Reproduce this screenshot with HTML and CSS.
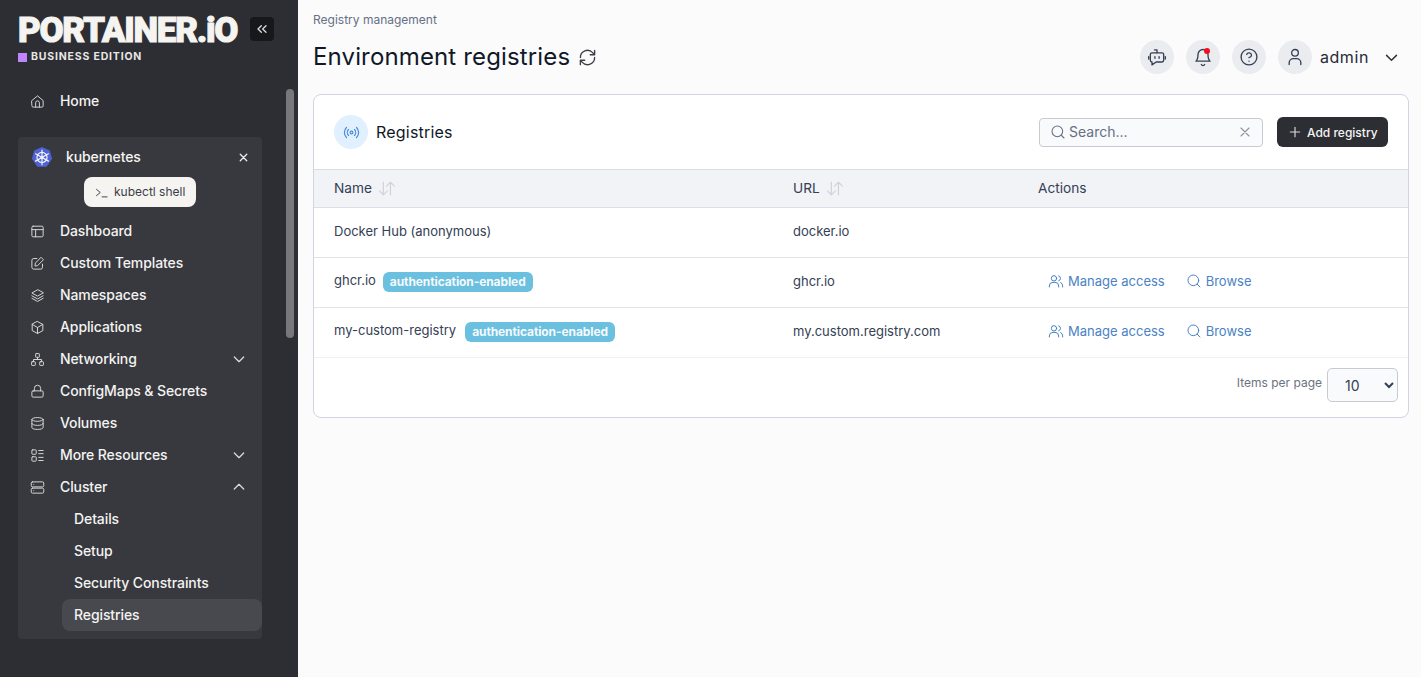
FILE: index.html
```html
<!DOCTYPE html>
<html lang="en">
<head>
<meta charset="utf-8">
<title>Environment registries</title>
<link rel="stylesheet" href="styles.css">
</head>
<body>
<div class="app">
  <aside class="sidebar">
    <div class="brand">
      <div class="brand-text">
        <div class="logo">PORTAINER.iO</div>
        <div class="edition"><span class="edition-mark"></span>BUSINESS EDITION</div>
      </div>
      <button class="collapse">
        <svg class="ic12" viewBox="0 0 24 24"><path d="M11 17l-5-5 5-5M18 17l-5-5 5-5"/></svg>
      </button>
    </div>
    <div class="side-scroll">
      <span class="thumb"></span>
      <a class="item home">
        <svg class="ic" viewBox="0 0 24 24"><path d="M3 10.500 12 3l9 7.500V19a2 2 0 0 1-2 2H5a2 2 0 0 1-2-2z"/><path d="M9 21v-7a3 3 0 0 1 6 0v7"/></svg>
        <span>Home</span>
      </a>
      <div class="env">
        <div class="env-head">
          <svg class="k8s" viewBox="0 0 24 24"><polygon class="k8s-bg" points="12,1 20.500,5 23,14 17,22.500 7,22.500 1,14 3.500,5"/><circle class="k8s-line" cx="12" cy="12.500" r="5.500"/><circle class="k8s-dot" cx="12" cy="12.500" r="1.400"/><path class="k8s-line" d="M12 4.500v16M5 8.500l14 8M19 8.500l-14 8"/></svg>
          <span class="env-name">kubernetes</span>
          <svg class="ic-x" viewBox="0 0 24 24"><path d="M6 6l12 12M18 6 6 18"/></svg>
        </div>
        <div class="shell-row">
          <button class="shell">
            <svg class="ic-term" viewBox="0 0 24 24"><path d="M4 17l6-5-6-5M13 19h8"/></svg>
            kubectl shell
          </button>
        </div>
        <a class="item">
          <svg class="ic" viewBox="0 0 24 24"><rect x="3" y="3.500" width="18" height="17" rx="2"/><path d="M3 9h18M9 9v11.500"/></svg>
          <span>Dashboard</span>
        </a>
        <a class="item">
          <svg class="ic" viewBox="0 0 24 24"><path d="M11 4H6a3 3 0 0 0-3 3v11a3 3 0 0 0 3 3h11a3 3 0 0 0 3-3v-5"/><path d="M18 2.500 21.500 6 12 15.500l-4 .5.500-4z"/></svg>
          <span>Custom Templates</span>
        </a>
        <a class="item">
          <svg class="ic" viewBox="0 0 24 24"><path d="M12 3 3 8l9 5 9-5z"/><path d="M3 12.500l9 5 9-5M3 16.500l9 5 9-5"/></svg>
          <span>Namespaces</span>
        </a>
        <a class="item">
          <svg class="ic" viewBox="0 0 24 24"><path d="M12 2.500 20.500 7v10L12 21.500 3.500 17V7z"/><path d="M3.500 7 12 12l8.500-5M12 12v9.500"/></svg>
          <span>Applications</span>
        </a>
        <a class="item">
          <svg class="ic" viewBox="0 0 24 24"><rect x="9" y="2.500" width="6" height="6" rx="1"/><rect x="2.500" y="15.500" width="6" height="6" rx="1"/><rect x="15.500" y="15.500" width="6" height="6" rx="1"/><path d="M12 8.500V12M5.500 15.500V12h13v3.500"/></svg>
          <span>Networking</span>
          <svg class="chev" viewBox="0 0 24 24"><path d="M5 9l7 7 7-7"/></svg>
        </a>
        <a class="item">
          <svg class="ic" viewBox="0 0 24 24"><rect x="3" y="11" width="18" height="10" rx="2"/><path d="M7 11V7a5 5 0 0 1 10 0v4"/></svg>
          <span>ConfigMaps &amp; Secrets</span>
        </a>
        <a class="item">
          <svg class="ic" viewBox="0 0 24 24"><ellipse cx="12" cy="5.500" rx="9" ry="3"/><path d="M3 5.500v13c0 1.700 4 3 9 3s9-1.300 9-3v-13M3 12c0 1.700 4 3 9 3s9-1.300 9-3"/></svg>
          <span>Volumes</span>
        </a>
        <a class="item">
          <svg class="ic" viewBox="0 0 24 24"><rect x="3" y="3" width="7" height="7" rx="1"/><rect x="3" y="14" width="7" height="7" rx="1"/><path d="M14 4h7M14 9h7M14 15h7M14 20h7"/></svg>
          <span>More Resources</span>
          <svg class="chev" viewBox="0 0 24 24"><path d="M5 9l7 7 7-7"/></svg>
        </a>
        <a class="item">
          <svg class="ic" viewBox="0 0 24 24"><rect x="2" y="3" width="20" height="8" rx="2"/><rect x="2" y="13" width="20" height="8" rx="2"/><path d="M6 7h.01M6 17h.01"/></svg>
          <span>Cluster</span>
          <svg class="chev" viewBox="0 0 24 24"><path d="M5 15l7-7 7 7"/></svg>
        </a>
        <a class="item sub">Details</a>
        <a class="item sub">Setup</a>
        <a class="item sub">Security Constraints</a>
        <a class="item sub active">Registries</a>
      </div>
    </div>
  </aside>

  <main class="main">
    <div class="crumb">Registry management</div>
    <header class="topbar">
      <h1 class="title">Environment registries</h1>
      <svg class="refresh" viewBox="0 0 24 24"><path d="M3 12a9 9 0 0 1 15.500-6.200L21 8.500M21 3v5.500h-5.500"/><path d="M21 12a9 9 0 0 1-15.500 6.200L3 15.500M3 21v-5.500h5.500"/></svg>
      <div class="top-actions">
        <span class="round">
          <svg class="ic-top" viewBox="0 0 24 24"><path d="M12 7V3.500H9"/><path d="M6 7h12a2 2 0 0 1 2 2v7a2 2 0 0 1-2 2h-7l-5 3.500V18a2 2 0 0 1-2-2V9a2 2 0 0 1 2-2z"/><path d="M2 11.500v3M22 11.500v3M9.500 11.500v2M14.500 11.500v2"/></svg>
        </span>
        <span class="round bell">
          <svg class="ic-top" viewBox="0 0 24 24"><path d="M18 9a6 6 0 0 0-12 0c0 6-2.500 8-2.500 8h17S18 15 18 9"/><path d="M10 21a2.200 2.200 0 0 0 4 0"/></svg>
          <span class="dot"></span>
        </span>
        <span class="round">
          <svg class="ic-top" viewBox="0 0 24 24"><circle cx="12" cy="12" r="9.500"/><path d="M9.200 9a3 3 0 0 1 5.800 1c0 2-3 2.800-3 2.800M12 17h.01"/></svg>
        </span>
        <span class="round">
          <svg class="ic-top" viewBox="0 0 24 24"><circle cx="12" cy="7" r="4"/><path d="M5 21v-2a5 5 0 0 1 5-5h4a5 5 0 0 1 5 5v2"/></svg>
        </span>
        <span class="user">admin</span>
        <svg class="user-chev" viewBox="0 0 24 24"><path d="M5 9l7 7 7-7"/></svg>
      </div>
    </header>

    <section class="card">
      <div class="card-head">
        <span class="card-icon">
          <svg viewBox="0 0 24 24"><circle cx="12" cy="12" r="2"/><path d="M16.200 7.800a6 6 0 0 1 0 8.400M7.800 16.200a6 6 0 0 1 0-8.400M19.100 4.900a10 10 0 0 1 0 14.200M4.900 19.100a10 10 0 0 1 0-14.200"/></svg>
        </span>
        <h2 class="card-title">Registries</h2>
        <div class="search">
          <svg class="search-ic" viewBox="0 0 24 24"><circle cx="11" cy="11" r="8"/><path d="M21 21l-4.300-4.300"/></svg>
          <span class="search-text">Search...</span>
          <svg class="search-x" viewBox="0 0 24 24"><path d="M6 6l12 12M18 6 6 18"/></svg>
        </div>
        <button class="add">
          <svg class="add-ic" viewBox="0 0 24 24"><path d="M12 4v16M4 12h16"/></svg>
          Add registry
        </button>
      </div>
      <table class="table">
        <colgroup><col class="c1"><col class="c2"><col></colgroup>
        <thead>
          <tr>
            <th>Name <svg class="sort" viewBox="0 0 24 24"><path d="M8 4v16M3 15l5 5 5-5M17 20V4M12 9l5-5 5 5"/></svg></th>
            <th>URL <svg class="sort" viewBox="0 0 24 24"><path d="M8 4v16M3 15l5 5 5-5M17 20V4M12 9l5-5 5 5"/></svg></th>
            <th>Actions</th>
          </tr>
        </thead>
        <tbody>
          <tr>
            <td>Docker Hub (anonymous)</td>
            <td>docker.io</td>
            <td></td>
          </tr>
          <tr>
            <td class="named">ghcr.io<span class="badge">authentication-enabled</span></td>
            <td>ghcr.io</td>
            <td class="acts">
              <a class="link"><svg class="ic-link" viewBox="0 0 24 24"><circle cx="9" cy="8" r="4"/><path d="M2 21v-1.500A5.500 5.500 0 0 1 7.500 14h3a5.500 5.500 0 0 1 5.500 5.500V21M16 4.200a4 4 0 0 1 0 7.600M19 14.300a5.500 5.500 0 0 1 3 5V21"/></svg>Manage access</a><a class="link"><svg class="ic-link" viewBox="0 0 24 24"><circle cx="11" cy="11" r="8"/><path d="M21 21l-4.300-4.300"/></svg>Browse</a>
            </td>
          </tr>
          <tr>
            <td class="named">my-custom-registry<span class="badge wide">authentication-enabled</span></td>
            <td>my.custom.registry.com</td>
            <td class="acts">
              <a class="link"><svg class="ic-link" viewBox="0 0 24 24"><circle cx="9" cy="8" r="4"/><path d="M2 21v-1.500A5.500 5.500 0 0 1 7.500 14h3a5.500 5.500 0 0 1 5.500 5.500V21M16 4.200a4 4 0 0 1 0 7.600M19 14.300a5.500 5.500 0 0 1 3 5V21"/></svg>Manage access</a><a class="link"><svg class="ic-link" viewBox="0 0 24 24"><circle cx="11" cy="11" r="8"/><path d="M21 21l-4.300-4.300"/></svg>Browse</a>
            </td>
          </tr>
        </tbody>
      </table>
      <div class="card-foot">
        <label class="per-label" for="per">Items per page</label>
        <select class="per" id="per"><option>10</option></select>
      </div>
    </section>
  </main>
</div>
</body>
</html>
```

FILE: styles.css
```css
* { box-sizing: border-box; }
html, body { margin: 0; height: 100%; overflow: hidden; }
body { font-family: Inter, "Liberation Sans", sans-serif; font-size: 14px; color: #1f2430; background: #fbfbfc; }
svg { fill: none; stroke: currentColor; stroke-width: 2; stroke-linecap: round; stroke-linejoin: round; flex: none; display: block; }
h1, h2 { margin: 0; font-weight: 400; }
button { font-family: inherit; border: 0; }

.app { display: flex; height: 677px; }

.sidebar { width: 298px; flex: none; background: #2d2e33; color: #f5f4f1; display: flex; flex-direction: column; }
.brand { display: flex; align-items: flex-start; padding: 17px 24px 0 18px; height: 85px; justify-content: space-between; }
.logo { font-family: Roboto, Inter, sans-serif; font-weight: 900; font-size: 35px; line-height: 27px; letter-spacing: -1.3px; color: #f5f4f0; white-space: nowrap; -webkit-text-stroke: 1px #f5f4f0; }
.edition { display: flex; align-items: center; margin-top: 6px; font-size: 10.500px; font-weight: 700; letter-spacing: .82px; line-height: 14px; color: #e8e7e4; white-space: nowrap; }
.edition-mark { width: 9px; height: 9px; background: #c084fc; margin-right: 4px; }
.collapse { width: 24px; height: 24px; border-radius: 4px; background: #17181b; color: #d8d8d8; padding: 0; display: flex; align-items: center; justify-content: center; }
.ic12 { width: 16px; height: 16px; }

.side-scroll { position: relative; padding: 0 36px 0 18px; }
.thumb { position: absolute; left: 286px; top: 4px; width: 8px; height: 249px; border-radius: 4px; background: #77777c; }
.item { display: flex; align-items: center; height: 32px; font-size: 14px; font-weight: 500; letter-spacing: -.1px; color: #f3f3f2; padding: 0 15px 2px 12px; border-radius: 8px; }
.item span { margin-left: 15px; }
.ic { width: 15px; height: 15px; margin-top: 2px; stroke-width: 1.600; color: #d4d4d6; }
.chev { width: 16px; height: 16px; margin-left: auto; margin-top: 2px; color: #d8d8da; }
.home { margin-bottom: 20px; }

.env { background: #38393e; border-radius: 4px; height: 502px; }
.env-head { display: flex; align-items: center; height: 40px; padding: 0 12px 0 13px; }
.k8s { width: 22px; height: 22px; stroke: none; }
.k8s-bg { fill: #4f62d3; }
.k8s-line { stroke: #f2f3fb; stroke-width: 1.300; fill: none; }
.k8s-dot { fill: #f2f3fb; }
.env-name { margin: 0 0 2px 13px; font-size: 14px; font-weight: 500; letter-spacing: -.1px; color: #f5f5f4; }
.ic-x { width: 13px; height: 13px; margin-left: auto; color: #f0f0f0; stroke-width: 2.400; }
.shell-row { display: flex; justify-content: center; height: 38px; }
.shell { display: flex; align-items: center; height: 30px; width: 112px; border-radius: 8px; background: #f5f4f0; color: #3a3d47; font-size: 12px; padding: 0 0 2px 10px; }
.ic-term { width: 15px; height: 15px; margin: 2px 5px 0 0; stroke-width: 1.500; color: #3a3d47; }
.sub { padding-left: 12px; margin-left: 44px; }
.active { background: #48494e; }

.main { flex: 1; padding: 13px 12px 0 15px; min-width: 0; }
.crumb { font-size: 12px; line-height: 14px; color: #667085; }
.topbar { display: flex; align-items: center; height: 40px; margin-top: 10px; margin-bottom: 17px; }
.title { font-size: 24px; line-height: 30px; color: #101828; letter-spacing: .14px; }
.refresh { width: 19px; height: 19px; margin-left: 8px; color: #3c3f46; stroke-width: 1.700; }
.top-actions { margin-left: auto; display: flex; align-items: center; gap: 12px; padding-right: 9px; color: #344054; }
.round { position: relative; width: 34px; height: 34px; border-radius: 50%; background: #eaecf0; display: flex; align-items: center; justify-content: center; }
.ic-top { width: 20px; height: 20px; stroke-width: 1.600; }
.dot { position: absolute; width: 6px; height: 6px; border-radius: 50%; background: #f30f1f; top: 8px; left: 18px; }
.user { font-size: 16px; margin-left: -4px; color: #252a35; letter-spacing: .6px; }
.user-chev { width: 17px; height: 17px; margin-left: 2px; color: #2f3137; }

.card { background: #fff; border: 1px solid #d0d5e2; border-radius: 8px; height: 324px; overflow: hidden; }
.card-head { display: flex; align-items: center; height: 74px; padding: 0 20px; }
.card-icon { width: 34px; height: 34px; border-radius: 50%; background: #e0f0fe; color: #4a8bd6; display: flex; align-items: center; justify-content: center; }
.card-icon svg { width: 17px; height: 17px; stroke-width: 1.700; }
.card-title { font-size: 16px; margin-left: 8px; color: #101828; letter-spacing: .2px; }
.search { margin-left: auto; display: flex; align-items: center; width: 224px; height: 29px; border: 1px solid #c7cad1; border-radius: 4px; background: #f9fafb; padding: 0 9px 0 10px; color: #667085; }
.search-ic { width: 16px; height: 16px; stroke-width: 1.600; }
.search-text { margin: 0 0 2px 3px; font-size: 14px; color: #667085; }
.search-x { width: 16px; height: 16px; margin-left: auto; color: #8e939c; stroke-width: 1.700; }
.add { margin-left: 14px; display: flex; align-items: center; height: 30px; width: 111px; background: #2d2e33; color: #f5f5f4; border-radius: 6px; font-size: 12px; font-weight: 500; padding: 0 0 0 11px; }
.add-ic { width: 14px; height: 14px; margin-right: 5px; color: #d8d8d8; stroke-width: 2; }

.table { width: 100%; border-collapse: collapse; table-layout: fixed; font-size: 13px; color: #344054; }
.c1 { width: 459px; }
.c2 { width: 245px; }
.table th { height: 38px; background: #f2f3f7; border-top: 1px solid #dcdee6; border-bottom: 1px solid #dcdee6; text-align: left; font-weight: 400; font-size: 13.700px; line-height: 20px; padding: 0 0 1px 20px; color: #344054; }
.sort { display: inline-block; width: 19px; height: 19px; vertical-align: -5px; margin-left: 1px; color: #d0d3da; stroke-width: 1.600; }
.table td { height: 50px; padding: 0 0 4px 20px; border-bottom: 1px solid #e2e3e6; }
.table tr:last-child td { border-bottom-color: #f0f1f2; }
.table td.acts { white-space: nowrap; padding-bottom: 0; }
.table td.named { padding-bottom: 1px; }
.badge { display: inline-block; margin-left: 7px; padding: 0 7px; height: 20px; line-height: 19px; border-radius: 6px; background: #6bbfdf; color: #f4fafd; font-size: 12px; font-weight: 700; letter-spacing: -.1px; vertical-align: -1px; }
.badge.wide { margin-left: 9px; }
.link { display: inline-flex; align-items: center; color: #4a82c4; margin-left: 10px; margin-right: 11px; }
.link + .link { margin-left: 10px; }
.ic-link { width: 16px; height: 16px; margin-right: 4px; stroke-width: 1.500; }

.card-foot { display: flex; align-items: center; justify-content: flex-end; padding: 10px 10px 0 0; }
.per-label { font-size: 12px; color: #6b7280; margin: 0 5px 5px 0; }
.per { width: 71px; height: 34px; border: 1px solid #c7cad1; border-radius: 5px; background-color: #f9fafb; color: #344054; font: 14px Inter, sans-serif; padding: 0 0 0 13px; }
```
